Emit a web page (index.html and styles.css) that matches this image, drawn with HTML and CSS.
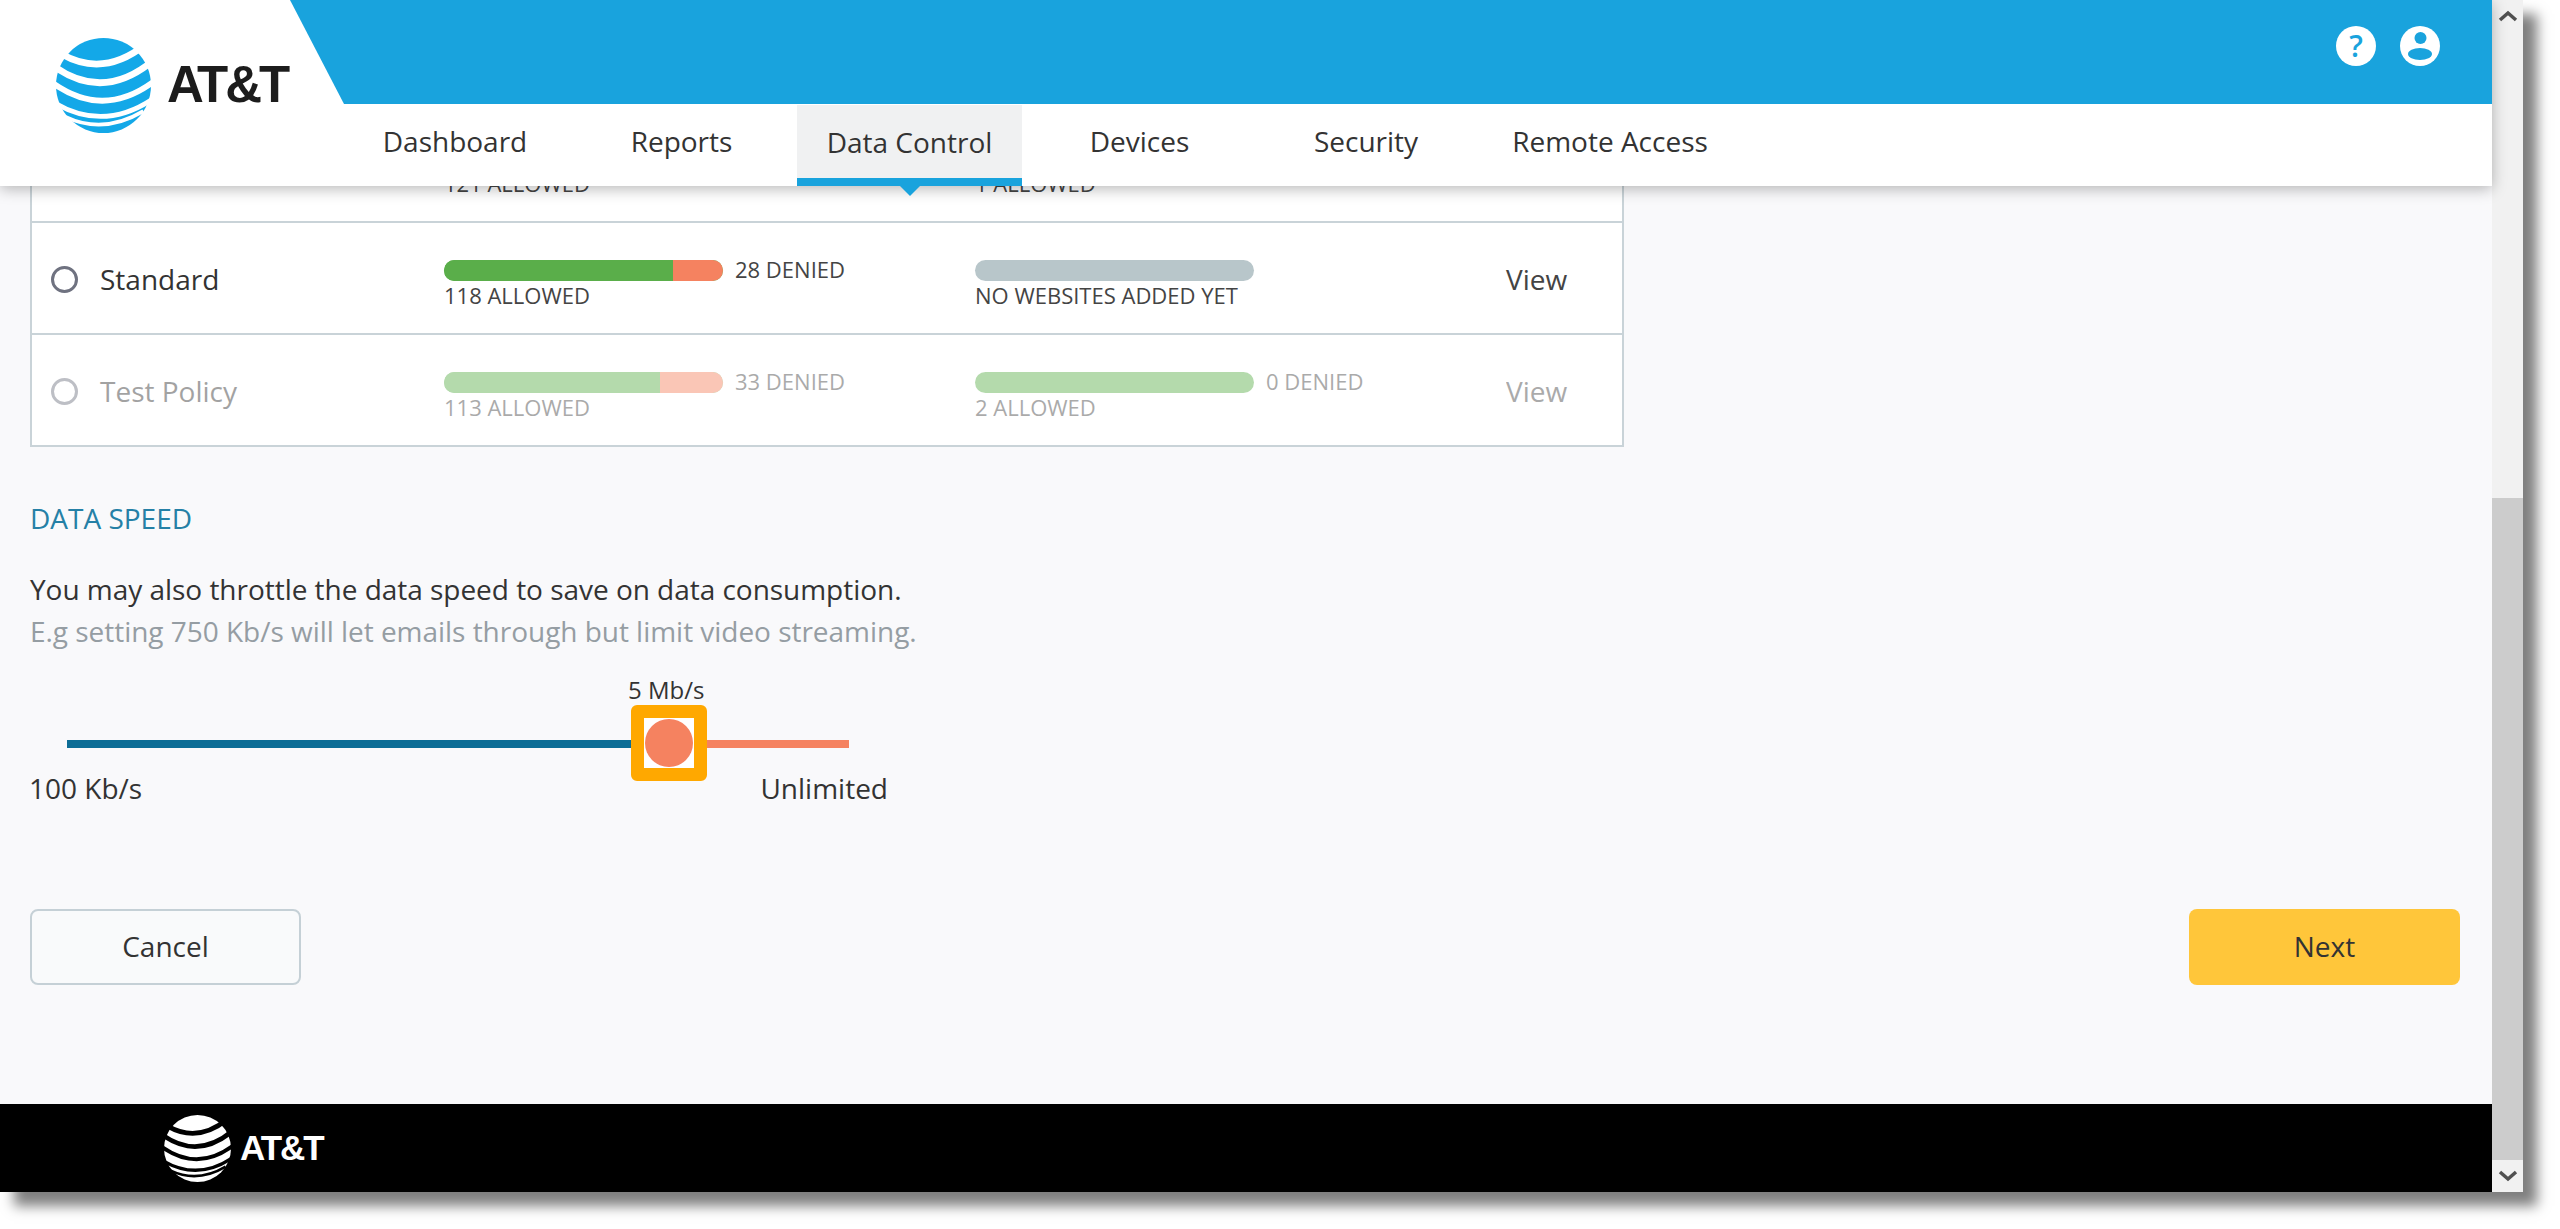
FILE: index.html
```html
<!DOCTYPE html>
<html lang="en">
<head>
<meta charset="utf-8">
<title>AT&amp;T Data Control</title>
<link rel="stylesheet" href="styles.css">
</head>
<body>
<svg class="defs" width="0" height="0" aria-hidden="true">
  <symbol id="globe" viewBox="0 0 100 100">
    <circle class="globe-ball" cx="50" cy="50" r="50"/>
    <g class="globe-bands">
      <path stroke-width="7" d="M6 17Q50 42 94 7"/>
      <path stroke-width="7" d="M-2 30Q50 67 102 24"/>
      <path stroke-width="6" d="M-4 47Q50 86 104 45"/>
      <path stroke-width="5" d="M-2 68Q50 99 102 64"/>
      <path stroke-width="4" d="M10 83Q50 102 92 77"/>
    </g>
  </symbol>
</svg>
<div class="window">
  <div class="viewport">
    <header class="site-header">
      <div class="logo">
        <svg class="logo-globe"><use href="#globe"/></svg>
        <span class="logo-text">AT&amp;T</span>
      </div>
      <div class="banner">
        <span class="help-icon">?</span>
        <svg class="user-icon" viewBox="0 0 40 40">
          <circle cx="20" cy="20" r="20" fill="#fff"/>
          <circle cx="20.500" cy="12" r="6" fill="#19a3dd"/>
          <ellipse cx="20" cy="28" rx="12" ry="6" fill="#19a3dd"/>
        </svg>
      </div>
      <nav class="nav">
        <a class="nav-item">Dashboard</a>
        <a class="nav-item">Reports</a>
        <a class="nav-item nav-active">Data Control</a>
        <a class="nav-item">Devices</a>
        <a class="nav-item">Security</a>
        <a class="nav-item">Remote Access</a>
      </nav>
    </header>
    <main class="main">
      <div class="scrolled">
        <section class="policy-table">
          <div class="policy-row">
            <div class="policy-name"></div>
            <div class="usage">
              <div class="usage-top"></div>
              <div class="usage-label">121 ALLOWED</div>
            </div>
            <div class="usage">
              <div class="usage-top"></div>
              <div class="usage-label">1 ALLOWED</div>
            </div>
            <div class="policy-view"></div>
          </div>
          <div class="policy-row">
            <div class="policy-name"><span class="radio"></span>Standard</div>
            <div class="usage">
              <div class="usage-top">
                <div class="bar"><span class="bar-ok" style="width:82%"></span><span class="bar-no"></span></div>
                <span class="usage-denied">28 DENIED</span>
              </div>
              <div class="usage-label">118 ALLOWED</div>
            </div>
            <div class="usage">
              <div class="usage-top">
                <div class="bar bar-empty"></div>
              </div>
              <div class="usage-label">NO WEBSITES ADDED YET</div>
            </div>
            <div class="policy-view">View</div>
          </div>
          <div class="policy-row row-disabled">
            <div class="policy-name"><span class="radio"></span>Test Policy</div>
            <div class="usage">
              <div class="usage-top">
                <div class="bar"><span class="bar-ok" style="width:77.500%"></span><span class="bar-no"></span></div>
                <span class="usage-denied">33 DENIED</span>
              </div>
              <div class="usage-label">113 ALLOWED</div>
            </div>
            <div class="usage">
              <div class="usage-top">
                <div class="bar"><span class="bar-ok" style="width:100%"></span></div>
                <span class="usage-denied">0 DENIED</span>
              </div>
              <div class="usage-label">2 ALLOWED</div>
            </div>
            <div class="policy-view">View</div>
          </div>
        </section>

        <h2 class="section-title">DATA SPEED</h2>
        <p class="intro">You may also throttle the data speed to save on data consumption.<br><span class="intro-muted">E.g setting 750 Kb/s will let emails through but limit video streaming.</span></p>

        <div class="slider">
          <div class="slider-value">5 Mb/s</div>
          <div class="slider-track">
            <span class="track-done"></span>
            <span class="track-rest"></span>
            <span class="slider-thumb"><span class="thumb-dot"></span></span>
          </div>
          <div class="slider-ends"><span>100 Kb/s</span><span>Unlimited</span></div>
        </div>

        <div class="actions">
          <button class="btn btn-cancel">Cancel</button>
          <button class="btn btn-next">Next</button>
        </div>
      </div>
    </main>
    <footer class="site-footer">
      <svg class="footer-globe"><use href="#globe"/></svg>
      <span class="footer-text">AT&amp;T</span>
    </footer>
  </div>
  <aside class="scrollbar">
    <div class="sb-btn"><svg viewBox="0 0 20 12" class="sb-chev"><path d="M2 10L10 3L18 10"/></svg></div>
    <div class="sb-track"><div class="sb-thumb"></div></div>
    <div class="sb-btn"><svg viewBox="0 0 20 12" class="sb-chev"><path d="M2 2L10 9L18 2"/></svg></div>
  </aside>
</div>
</body>
</html>
```
FILE: styles.css
```css
* { box-sizing: border-box; }
html, body { margin: 0; height: 100%; background: #fff; overflow: hidden; }
body { font-family: "Open Sans", "Noto Sans", sans-serif; color: #333; }
.defs { position: absolute; }

.window {
  display: flex;
  width: 2523px;
  height: 1192px;
  box-shadow: 14px 14px 12px rgba(0, 0, 0, 0.5);
}
.viewport {
  flex: 1;
  min-width: 0;
  display: flex;
  flex-direction: column;
  position: relative;
  background: #f9f9fb;
}

/* header */
.site-header {
  position: relative;
  z-index: 2;
  height: 186px;
  flex: none;
  background: #fff;
  box-shadow: 0 3px 14px rgba(0, 0, 0, 0.28);
}
.banner {
  height: 104px;
  background: #19a3dd;
  clip-path: polygon(290px 0, 100% 0, 100% 100%, 344px 100%);
  display: flex;
  justify-content: flex-end;
  align-items: flex-start;
  gap: 24px;
  padding: 26px 52px 0 0;
}
.help-icon {
  width: 40px;
  height: 40px;
  border-radius: 50%;
  background: #fff;
  color: #19a3dd;
  font-size: 30px;
  font-weight: 600;
  line-height: 40px;
  text-align: center;
}
.user-icon { width: 40px; height: 40px; }
.logo {
  position: absolute;
  left: 56px;
  top: 38px;
  display: flex;
  align-items: center;
  gap: 16px;
  z-index: 1;
}
.logo-globe { width: 95px; height: 95px; color: #13a8e8; --stripe: #fff; }
.globe-ball { fill: currentColor; }
.globe-bands path { fill: none; stroke: var(--stripe); }
.logo-text {
  font-family: "Liberation Sans", Arial, sans-serif;
  font-weight: 700;
  font-size: 51px;
  letter-spacing: -3px;
  color: #1c1c1c;
  margin-bottom: 2px;
}
.nav {
  height: 82px;
  padding-left: 342px;
  display: grid;
  grid-template-columns: 226px 227px 227px 235px 218px 270px;
}
.nav-item {
  display: flex;
  justify-content: center;
  align-items: center;
  padding-bottom: 8px;
  font-size: 28px;
  color: #333;
  position: relative;
}
.nav-active {
  background: #f0f1f2;
  border-bottom: 8px solid #19a3dd;
  padding-bottom: 0;
  margin: 1px 0 0 2px;
}
.nav-active::after {
  content: "";
  position: absolute;
  left: 50%;
  bottom: -18px;
  margin-left: -10px;
  border: 10px solid transparent;
  border-bottom: 0;
  border-top-color: #19a3dd;
}

/* main */
.main {
  flex: 1;
  min-height: 0;
  overflow: hidden;
}
.scrolled {
  margin-top: -75px;
  padding: 0 32px 0 30px;
}
.policy-table {
  width: 1594px;
  background: #fff;
  border-left: 2px solid #c9d3d8;
  border-right: 2px solid #c9d3d8;
}
.policy-row {
  height: 112px;
  display: grid;
  grid-template-columns: 412px 531px 531px 1fr;
  border-bottom: 2px solid #c9d3d8;
}
.row-disabled > * { opacity: 0.45; }
.policy-name {
  display: flex;
  align-items: center;
  gap: 22px;
  padding: 2px 0 0 19px;
  font-size: 28px;
  color: #333;
}
.radio {
  width: 27px;
  height: 27px;
  border-radius: 50%;
  border: 3px solid #6f7280;
  background: #fff;
}
.usage { padding-top: 32px; }
.usage-top {
  height: 30px;
  display: flex;
  align-items: center;
  gap: 12px;
  font-size: 22px;
  color: #444;
}
.usage-denied { margin-bottom: 3px; }
.usage-label {
  margin-top: -4px;
  font-size: 22px;
  line-height: 28px;
  color: #444;
}
.bar {
  width: 279px;
  height: 21px;
  border-radius: 11px;
  overflow: hidden;
  display: flex;
  background: #5aae4a;
}
.bar-ok { display: block; background: #5aae4a; }
.bar-no { display: block; flex: 1; background: #f58260; }
.bar-empty { background: #b8c6ca; }
.policy-view {
  display: flex;
  align-items: center;
  padding-top: 2px;
  font-size: 28px;
  color: #444;
}

.section-title {
  margin: 54px 0 0;
  font-size: 28px;
  line-height: 34px;
  font-weight: 400;
  color: #2580a6;
}
.intro {
  margin: 33px 0 0;
  font-size: 28px;
  line-height: 42px;
  letter-spacing: -0.03px;
  color: #333;
}
.intro-muted { color: #959da3; }

.slider { width: 858px; margin-top: 23px; }
.slider-value {
  padding-left: 598px;
  font-size: 24px;
  line-height: 30px;
  color: #333;
}
.slider-track {
  position: relative;
  display: flex;
  height: 8px;
  margin: 35px 0 0 37px;
  width: 782px;
}
.track-done { width: 579px; background: #0d6d96; }
.track-rest { flex: 1; background: #f58260; }
.slider-thumb {
  position: absolute;
  left: 564px;
  top: -35px;
  width: 76px;
  height: 76px;
  border: 13px solid #ffa800;
  border-radius: 6px;
  background: #fff;
  display: flex;
  align-items: center;
  justify-content: center;
}
.thumb-dot {
  width: 48px;
  height: 48px;
  border-radius: 50%;
  background: #f58260;
}
.slider-ends {
  display: flex;
  justify-content: space-between;
  margin: 22px 0 0 -1px;
  font-size: 28px;
  line-height: 36px;
  color: #333;
}

.actions {
  display: flex;
  justify-content: space-between;
  margin-top: 103px;
}
.btn {
  width: 271px;
  height: 76px;
  border-radius: 8px;
  font-family: inherit;
  font-size: 28px;
  color: #333;
  padding: 0 0 2px;
}
.btn-cancel { background: #f9fafb; border: 2px solid #c5d0d6; }
.btn-next { background: #ffc63a; border: 0; }

.site-footer {
  flex: none;
  height: 88px;
  background: #000;
  display: flex;
  align-items: center;
  padding-left: 164px;
  gap: 9px;
}
.footer-globe { width: 67px; height: 67px; color: #fff; --stripe: #000; }
.footer-text {
  font-family: "Liberation Sans", Arial, sans-serif;
  font-weight: 700;
  font-size: 35px;
  letter-spacing: -2px;
  color: #fff;
}

/* scrollbar */
.scrollbar {
  width: 31px;
  flex: none;
  display: flex;
  flex-direction: column;
  background: #f1f1f1;
}
.sb-btn {
  height: 32px;
  flex: none;
  display: flex;
  align-items: center;
  justify-content: center;
}
.sb-chev { width: 20px; height: 12px; }
.sb-chev path { fill: none; stroke: #505050; stroke-width: 3.5; }
.sb-track { flex: 1; padding-top: 466px; }
.sb-thumb { height: 100%; background: #ccc; }
```
